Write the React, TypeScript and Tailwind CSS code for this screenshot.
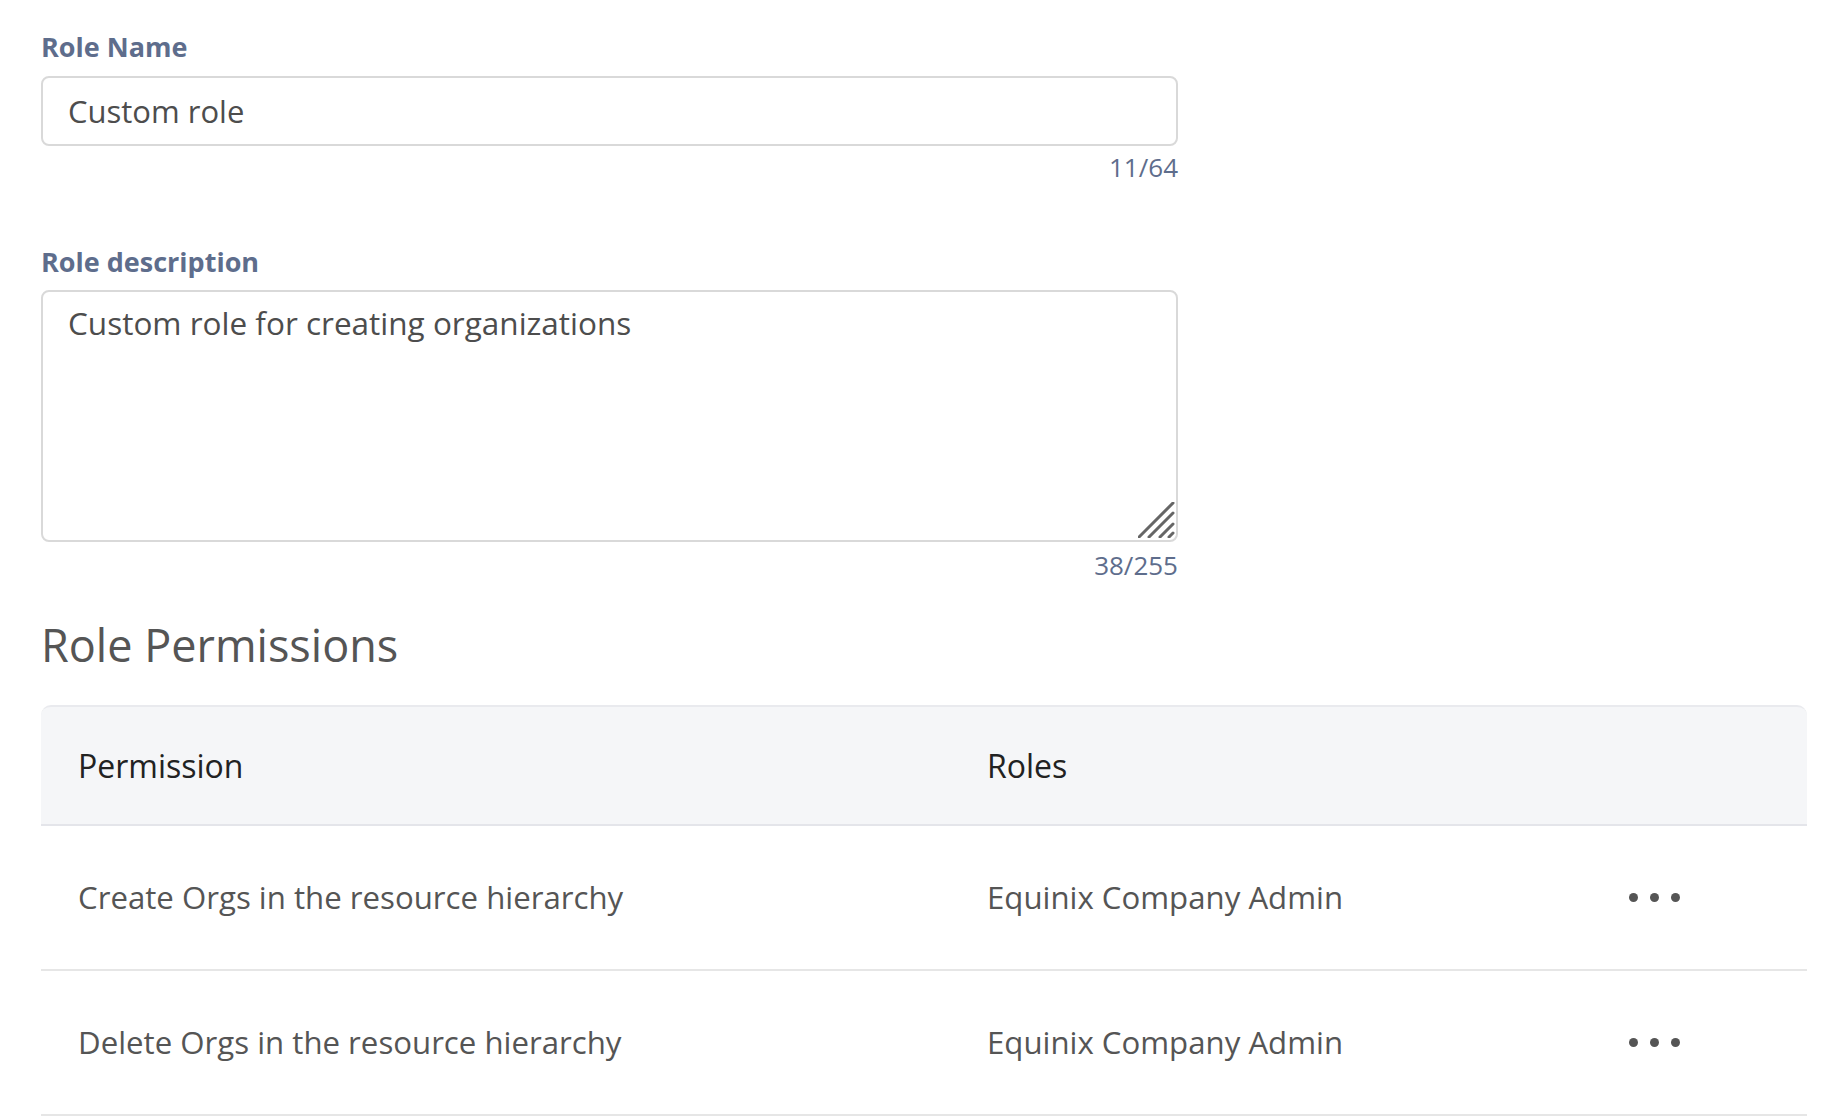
import React from 'react'

const permissions = [
  { name: 'Create Orgs in the resource hierarchy', role: 'Equinix Company Admin' },
  { name: 'Delete Orgs in the resource hierarchy', role: 'Equinix Company Admin' }
]

function MoreDots() {
  return (
    <svg width="51" height="9" viewBox="0 0 51 9" className="block">
      <circle cx="4.5" cy="4.5" r="4.5" fill="#555" />
      <circle cx="25.5" cy="4.5" r="4.5" fill="#555" />
      <circle cx="46.5" cy="4.5" r="4.5" fill="#555" />
    </svg>
  )
}

function ResizeGrip() {
  return (
    <svg
      width="37"
      height="36"
      viewBox="0 0 37 36"
      className="absolute right-[3px] bottom-[4px] pointer-events-none"
    >
      <g stroke="#666" strokeWidth="3" strokeLinecap="round">
        <line x1="1" y1="35" x2="35" y2="1" />
        <line x1="11" y1="35" x2="35" y2="11" />
        <line x1="22" y1="35" x2="35" y2="22" />
        <line x1="31" y1="35" x2="35" y2="31" />
      </g>
    </svg>
  )
}

export default function App() {
  return (
    <div className="min-h-screen bg-white font-['Open_Sans',sans-serif] pl-[41px] pr-[38px] pt-[29px]">
      <div className="w-[1137px]">
        <label className="block text-[27px] leading-[36px] font-bold text-[#5e6d8c]">
          Role Name
        </label>
        <input
          type="text"
          defaultValue="Custom role"
          className="mt-[11px] block w-full h-[70px] rounded-[8px] border-2 border-[#d9d9d9] px-[25px] text-[31px] text-[#4d4d4d] outline-none"
        />
        <div className="mt-[3px] text-right text-[26px] leading-[36px] text-[#5e6d8c]">
          11/64
        </div>

        <label className="mt-[59px] block text-[27px] leading-[36px] font-bold text-[#5e6d8c]">
          Role description
        </label>
        <div className="relative mt-[10px]">
          <textarea
            defaultValue="Custom role for creating organizations"
            className="block w-full h-[252px] resize-none rounded-[8px] border-2 border-[#d9d9d9] px-[25px] pt-[11px] pb-[9px] text-[31.5px] leading-[40px] text-[#4d4d4d] outline-none"
          />
          <ResizeGrip />
        </div>
        <div className="mt-[5px] text-right text-[26px] leading-[36px] text-[#5e6d8c]">
          38/255
        </div>
      </div>

      <h2 className="mt-[32px] text-[45px] leading-[60px] text-[#555]">Role Permissions</h2>

      <div className="mt-[30px]">
        <div className="grid grid-cols-[909px_560px_1fr] items-center h-[121px] rounded-t-[10px] border-t-2 border-b-2 border-t-[#e9eaee] border-b-[#e4e5ea] bg-[#f5f6f8] text-[32px] text-[#222]">
          <div className="pl-[37px]">Permission</div>
          <div className="pl-[37px]">Roles</div>
          <div />
        </div>
        {permissions.map(p => (
          <div
            key={p.name}
            className="grid grid-cols-[909px_560px_1fr] items-center h-[145px] border-b-2 border-[#e6e6e6] text-[31.2px] text-[#555]"
          >
            <div className="pl-[37px]">{p.name}</div>
            <div className="pl-[37px]">{p.role}</div>
            <div className="pl-[119px]">
              <MoreDots />
            </div>
          </div>
        ))}
      </div>
    </div>
  )
}
